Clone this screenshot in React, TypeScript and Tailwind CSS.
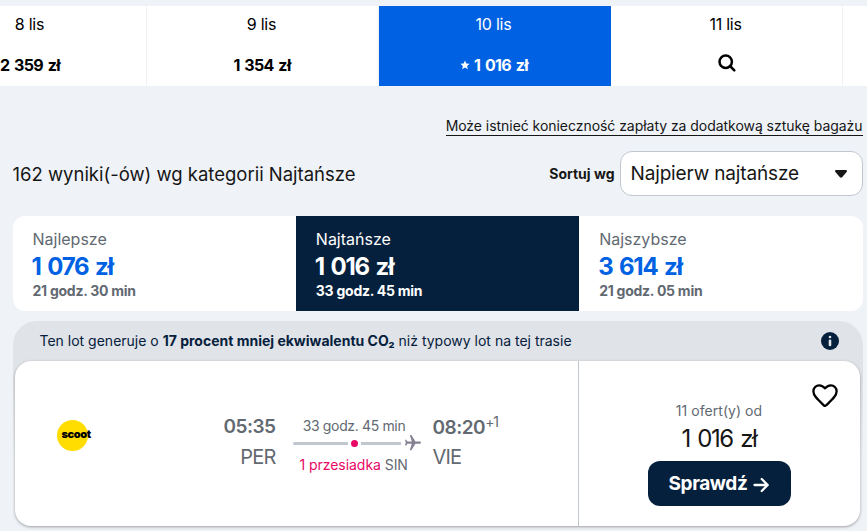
import React from 'react';

interface DateCell {
  key: string;
  label?: string;
  price?: string;
  selected?: boolean;
}

interface SortTab {
  title: string;
  price: string;
  duration: string;
  selected?: boolean;
}

// The last cell only peeks in from the right edge
const dates: DateCell[] = [
  { key: '8', label: '8 lis', price: '2 359 zł' },
  { key: '9', label: '9 lis', price: '1 354 zł' },
  { key: '10', label: '10 lis', price: '1 016 zł', selected: true },
  { key: '11', label: '11 lis' },
  { key: '12' },
];

const tabs: SortTab[] = [
  { title: 'Najlepsze', price: '1 076 zł', duration: '21 godz. 30 min' },
  { title: 'Najtańsze', price: '1 016 zł', duration: '33 godz. 45 min', selected: true },
  { title: 'Najszybsze', price: '3 614 zł', duration: '21 godz. 05 min' },
];

const StarIcon = () => (
  <svg viewBox="0 0 24 24" className="h-[10px] w-[10px]" fill="currentColor">
    <path d="M12 1l3.1 7.3 7.9.7-6 5.2 1.9 7.8L12 17.9 5.1 22 7 14.2 1 9l7.9-.7z" />
  </svg>
);

const SearchIcon = () => (
  <svg viewBox="0 0 18 18" className="h-[18px] w-[18px]" fill="none" stroke="currentColor" strokeWidth="2.5">
    <circle cx="7.7" cy="7.7" r="6.2" />
    <path d="M12 12l4.3 4.3" strokeLinecap="round" />
  </svg>
);

const InfoIcon = () => (
  <svg viewBox="0 0 18 18" className="h-[18px] w-[18px]">
    <circle cx="9" cy="9" r="9" fill="#05203c" />
    <circle cx="9" cy="5" r="1.3" fill="#e0e3e8" />
    <path d="M9 8.7v4.3" stroke="#e0e3e8" strokeWidth="2.6" strokeLinecap="round" />
  </svg>
);

const HeartIcon = () => (
  <svg viewBox="0 0 26 24" className="h-6 w-[26px]" fill="none" stroke="#000" strokeWidth="2.3" strokeLinejoin="round">
    <path d="M13 4.4C11.3 2.3 9.5 1.3 7.3 1.3 4 1.3 1.4 4 1.4 7.4c0 4.5 4.9 8.6 10.4 13.9.8.8 1.6.8 2.4 0 5.5-5.3 10.4-9.4 10.4-13.9 0-3.4-2.6-6.1-5.9-6.1-2.2 0-4 1-5.7 3.100z" />
  </svg>
);

const PlaneIcon = () => (
  <svg viewBox="2 2 20 20" className="h-4 w-4 rotate-90" fill="#868192">
    <path d="M21 16v-2l-8-5V3.5c0-.83-.67-1.5-1.5-1.5S10 2.67 10 3.5V9l-8 5v2l8-2.5V19l-2 1.5V22l3.5-1 3.5 1v-1.5L13 19v-5.5l8 2.5z" />
  </svg>
);

const ArrowIcon = () => (
  <svg
    viewBox="0 0 16 16"
    className="mt-px h-4 w-4"
    fill="none"
    stroke="currentColor"
    strokeWidth="2.3"
    strokeLinecap="round"
    strokeLinejoin="round"
  >
    <path d="M1.5 8h13M8.7 2L14.7 8l-6 6" />
  </svg>
);

const DateStrip = () => (
  <div className="overflow-hidden pt-1.5">
    <div className="-ml-[85px] flex h-20 w-[1160px]">
      {dates.map((date) => (
        <div
          key={date.key}
          className={`flex w-[232px] shrink-0 flex-col items-center border-r pt-1.5 pr-0.5 ${
            date.selected ? 'border-[#0062e3] bg-[#0062e3] text-white' : 'border-[#eff3f8] bg-white text-black'
          }`}
        >
          {date.label && <span className="text-base leading-6 tracking-[-0.25px]">{date.label}</span>}
          {date.price && (
            <span className="mt-[17px] flex items-center gap-1 pl-px text-base leading-6 font-bold tracking-[-0.65px] [word-spacing:1.5px]">
              {date.selected && <StarIcon />}
              {date.price}
            </span>
          )}
          {date.label && !date.price && (
            <span className="mt-[18px] ml-[3px]">
              <SearchIcon />
            </span>
          )}
        </div>
      ))}
    </div>
  </div>
);

const SortTabs = () => (
  <div className="mt-5 flex h-[95px] overflow-hidden rounded-xl bg-white">
    {tabs.map((tab) => (
      <div
        key={tab.title}
        className={`flex flex-1 flex-col items-start pt-[11px] pl-5 whitespace-nowrap ${
          tab.selected ? 'bg-[#05203c] text-white' : 'text-[#626971]'
        }`}
      >
        <span className="text-base leading-6">{tab.title}</span>
        <span
          className={`mt-0.5 -ml-px text-2xl leading-7 font-bold tracking-[-1.2px] [word-spacing:2px] ${
            tab.selected ? '' : 'text-[#0062e3]'
          }`}
        >
          {tab.price}
        </span>
        <span className="text-sm leading-5 font-bold tracking-[-0.25px]">{tab.duration}</span>
      </div>
    ))}
  </div>
);

const FlightCard = () => (
  <div className="mt-2.5">
    {/* Emissions banner, fades out behind the ticket */}
    <div className="flex h-[140px] items-start justify-between rounded-t-3xl bg-linear-to-b from-[#e0e3e8] from-40% to-[#eff3f8] pt-2.5 pr-6 pl-[27px] text-[#05203c]">
      <p className="text-sm leading-5 whitespace-nowrap">
        Ten lot generuje o <b>17 procent mniej ekwiwalentu CO₂</b> niż typowy lot na tej trasie
      </p>
      <span className="mt-px">
        <InfoIcon />
      </span>
    </div>

    <div className="relative mr-[3px] ml-0.5 -mt-[100px] flex h-[165px] rounded-2xl bg-white shadow-[0_1px_3px_0_rgba(37,32,31,0.4)]">
      <div className="flex w-[564px] border-r border-[#c1c7cf] pt-[52px] text-[#626971]">
        {/* Airline */}
        <div className="mt-[7px] ml-[42px] flex h-[31px] w-[31px] items-center rounded-full bg-[#ffdd00]">
          <span className="-mt-[3px] ml-[5px] text-[11px] leading-3 font-black tracking-[-0.4px] text-black">scoot</span>
        </div>

        <div className="ml-[108px] flex w-20 flex-col items-end">
          <span className="text-[19px] leading-7 font-semibold tracking-[-0.5px]">05:35</span>
          <span className="mt-0.5 text-xl leading-7 tracking-[-0.8px]">PER</span>
        </div>

        <div className="ml-[17px] flex w-32 flex-col">
          <span className="mt-px pr-[5px] text-center text-sm leading-6 tracking-[-0.35px] whitespace-nowrap">
            33 godz. 45 min
          </span>
          <div className="-mt-px flex h-3 items-center">
            <span className="h-[3px] w-[55px] rounded-l-full bg-[#c1c7cf]" />
            <span className="mx-[3px] h-[7px] w-[7px] rounded-full bg-[#e70866]" />
            <span className="h-[3px] w-10 bg-[#c1c7cf]" />
            <span className="ml-1">
              <PlaneIcon />
            </span>
          </div>
          <span className="mt-1 pl-[7px] text-sm leading-6 tracking-[-0.05px] whitespace-nowrap">
            <span className="text-[#e70866]">1 przesiadka</span> SIN
          </span>
        </div>

        <div className="mt-px ml-3 flex flex-col">
          <span className="flex text-[19px] leading-7 font-semibold tracking-[-0.5px]">
            08:20
            <span className="-mt-1.5 text-sm leading-7 font-normal tracking-[-1.2px]">+1</span>
          </span>
          <span className="mt-px text-xl leading-7 tracking-[-0.8px]">VIE</span>
        </div>
      </div>

      <div className="flex flex-1 flex-col items-center">
        <button className="mt-[23px] mr-[22px] self-end">
          <HeartIcon />
        </button>
        <span className="-mt-[7px] text-sm leading-5 tracking-[0.05px] text-[#626971]">11 ofert(y) od</span>
        <span className="mt-0.5 text-2xl leading-8 tracking-[-1.4px] text-[#161616] [word-spacing:2px]">1 016 zł</span>
        <button className="mt-1.5 flex h-[45px] w-[143px] items-center justify-center gap-1.5 rounded-xl bg-[#05203c] pt-0.5 text-[19px] font-bold tracking-[-0.4px] text-white">
          Sprawdź
          <ArrowIcon />
        </button>
      </div>
    </div>
  </div>
);

const App = () => (
  <div className="h-[531px] w-[867px] overflow-hidden bg-[#eff3f8] font-['Inter','Liberation_Sans',sans-serif] text-[#161616]">
    <DateStrip />

    <div className="pr-[4.5px] pl-[12.5px]">
      <div className="mt-[30px] flex justify-end">
        <a className="border-b border-[#161616] text-sm leading-[19px] tracking-[-0.045px] whitespace-nowrap">
          Może istnieć konieczność zapłaty za dodatkową sztukę bagażu
        </a>
      </div>

      <div className="mt-[15px] flex h-[45px] items-center justify-between">
        <h1 className="mt-0.5 text-[18.5px] tracking-[-0.01px] whitespace-nowrap">
          162 wyniki(-ów) wg kategorii Najtańsze
        </h1>
        <div className="flex items-center gap-[5px]">
          <span className="text-sm font-bold">Sortuj wg</span>
          <button className="flex h-[45px] w-[243px] items-center justify-between rounded-xl border border-[#c1c7cf] bg-white pr-[15px] pl-2.5">
            <span className="mt-0.5 text-[19px] tracking-[-0.15px] whitespace-nowrap">Najpierw najtańsze</span>
            <svg viewBox="0 0 12 8" className="h-2 w-3" fill="#161616">
              <path d="M1.2 0h9.6c1.1 0 1.5 1.1.8 1.9L7.3 7c-.8.9-1.8.9-2.6 0L.4 1.9C-.3 1.1.1 0 1.2 0z" />
            </svg>
          </button>
        </div>
      </div>

      <SortTabs />
      <FlightCard />
    </div>
  </div>
);

export default App;
